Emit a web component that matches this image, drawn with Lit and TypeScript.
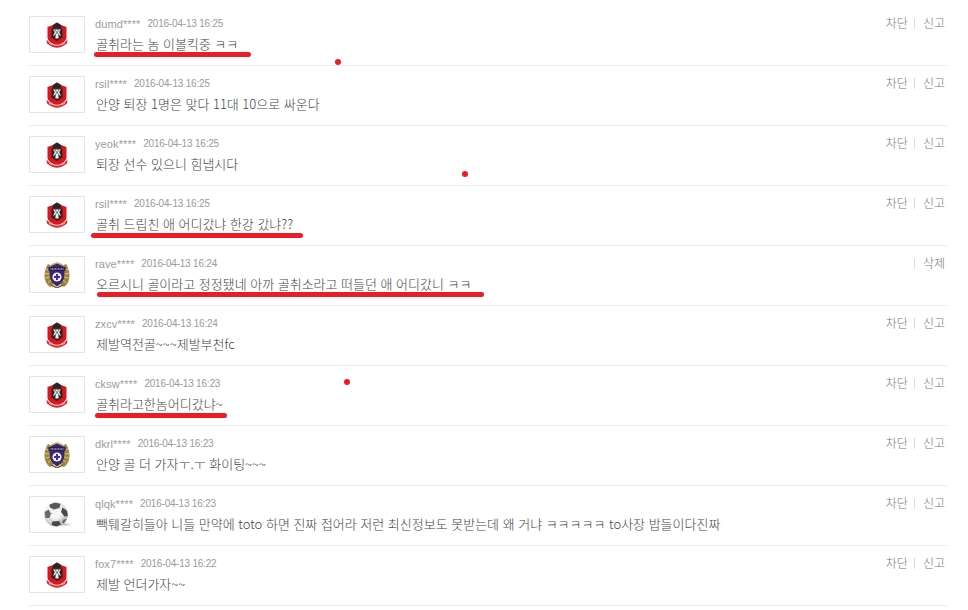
import { LitElement, html, css, svg } from "lit";
import { customElement } from "lit/decorators.js";

const red = svg`<svg class="crest" width="22" height="26" viewBox="0 0 22 26">
  <path d="M1.5 5 L7 3 L11 0.5 L15 3 L20.5 5 L20.5 16 C19.5 20 15 22 11 23.5 C7 22 2.5 20 1.5 16 Z" fill="#d7181e"/>
  <path d="M7 3 L11 0.5 L15 3 L15.5 6.5 L6.5 6.5 Z" fill="#2a2526"/>
  <path d="M5.5 6.5 H16.5 V15.5 L11 19 L5.5 15.5 Z" fill="#2b2325"/>
  <path d="M7 7.5 H15 L13.2 10 L15 14 L12.4 12.4 L12.6 16.5 L9.4 16.5 L9.6 12.4 L7 14 L8.8 10 Z" fill="#eeeeee"/>
  <path d="M9 8 L13 13 M13 8 L9 13" stroke="#555" stroke-width="0.8"/>
  <path d="M0.5 17.5 C3 21 7 23 11 23.5 C15 23 19 21 21.5 17.5 L21 21.5 C17 24.5 14 25.7 11 25.7 C8 25.7 5 24.5 1 21.5 Z" fill="#d82a30"/>
  <path d="M3 21.2 C7 23.8 15 23.8 19 21.2" fill="none" stroke="#f8d0d0" stroke-width="0.8"/>
</svg>`;

const purple = svg`<svg class="crest" width="26" height="26" viewBox="0 0 26 26">
  <path d="M4 2 C-1 10 -1 20 6 25 L11 21 C7 17 6 11 8 4 Z" fill="#a0823f"/>
  <path d="M22 2 C27 10 27 20 20 25 L15 21 C19 17 20 11 18 4 Z" fill="#a0823f"/>
  <path d="M2 7 L5 8.5 M1 11.5 L5 12 M1.5 16 L5.5 15 M4 20.5 L7 18 M24 7 L21 8.5 M25 11.5 L21 12 M24.5 16 L20.5 15 M22 20.5 L19 18" stroke="#e0c888" stroke-width="1"/>
  <path d="M13 1 L18 3 L20.5 7 L20 16 C19 20 16 22.5 13 24.5 C10 22.5 7 20 6 16 L5.5 7 L8 3 Z" fill="#38266f"/>
  <path d="M4.5 5 H21.5 V9 H4.5 Z" fill="#2a1e55"/>
  <path d="M6.5 7 H19.5" stroke="#d8d2ee" stroke-width="1.1" stroke-dasharray="1 .5"/>
  <circle cx="13" cy="15" r="4.6" fill="#efeaf6"/>
  <path d="M13 12 V18 M10 15 H16" stroke="#43308a" stroke-width="2"/>
  <path d="M7.5 3 L13 0.8 L18.5 3" fill="none" stroke="#cdac62" stroke-width="1.4"/>
  <path d="M7 23 L13 25.8 L19 23" fill="none" stroke="#7a5d28" stroke-width="1.4"/>
</svg>`;

const ball = svg`<svg class="crest ballicon" width="32" height="26" viewBox="0 0 32 26">
  <defs>
    <radialGradient id="sh" cx="0.5" cy="0.5" r="0.5"><stop offset="0" stop-color="#a9b9ca"/><stop offset="1" stop-color="#fff" stop-opacity="0"/></radialGradient>
    <radialGradient id="bg" cx="0.42" cy="0.36" r="0.72"><stop offset="0.4" stop-color="#f6f6f6"/><stop offset="1" stop-color="#a8a8a8"/></radialGradient>
  </defs>
  <ellipse cx="21" cy="22.5" rx="11" ry="3" fill="url(#sh)"/>
  <circle cx="12" cy="12.5" r="12" fill="url(#bg)"/>
  <path d="M5.5 2.5 L11 0.6 L16.5 1.8 L15.5 6 L10 7.5 L5.8 5.5 Z" fill="#5a5a5a"/>
  <path d="M18.5 5.5 L23 9 L23.8 14 L20.5 14.5 L17 10 Z" fill="#4a4a4a"/>
  <path d="M0.6 10 L4.5 7.5 L7 11.5 L5.5 16 L1.5 16 Z" fill="#6a6a6a"/>
  <path d="M8.5 19.5 L15 19 L17 22.5 L12.5 24.4 L7.5 23 Z" fill="#474747"/>
  <path d="M19.5 17.5 L22.5 17 L20 21.5 L18 20.5 Z" fill="#666"/>
  <path d="M10 7.5 L8.5 9 M15.5 6 L17.5 7 M7 11.5 L9 11.5 M5.5 16 L8.5 19.5 M15 19 L18.5 17.5 M20.5 14.5 L19.5 17.5" stroke="#aaa" stroke-width="0.6"/>
</svg>`;

type Row = { u: string; d: string; t: string; a: "r" | "p" | "b"; mine?: boolean; ul?: [number, number, number] };

const rows: Row[] = [
  { u: "dumd****", d: "2016-04-13 16:25", t: "골취라는 놈 이볼킥중 ㅋㅋ", a: "r", ul: [94, 251, 46] },
  { u: "rsil****", d: "2016-04-13 16:25", t: "안양 퇴장 1명은 맞다 11대 10으로 싸운다", a: "r" },
  { u: "yeok****", d: "2016-04-13 16:25", t: "퇴장 선수 있으니 힘냅시다", a: "r" },
  { u: "rsil****", d: "2016-04-13 16:25", t: "골취 드립친 애 어디갔냐 한강 갔냐??", a: "r", ul: [91, 303, 47] },
  { u: "rave****", d: "2016-04-13 16:24", t: "오르시니 골이라고 정정됐네 아까 골취소라고 떠들던 애 어디갔니 ㅋㅋ", a: "p", mine: true, ul: [97, 484, 46] },
  { u: "zxcv****", d: "2016-04-13 16:24", t: "제발역전골~~~제발부천fc", a: "r" },
  { u: "cksw****", d: "2016-04-13 16:23", t: "골취라고한놈어디갔냐~", a: "r", ul: [95, 227, 47] },
  { u: "dkrl****", d: "2016-04-13 16:23", t: "안양 골 더 가자ㅜ.ㅜ 화이팅~~~", a: "p" },
  { u: "qlqk****", d: "2016-04-13 16:23", t: "빽퉤갈히들아 니들 만약에 toto 하면 진짜 접어라 저런 최신정보도 못받는데 왜 거냐 ㅋㅋㅋㅋㅋ to사장 밥들이다진짜", a: "b" },
  { u: "fox7****", d: "2016-04-13 16:22", t: "제발 언더가자~~", a: "r" },
];

const dots = [[335, 59], [462, 171], [344, 379]];

@customElement("app-root")
export class AppRoot extends LitElement {
  static styles = css`
    :host { display: block; width: 968px; height: 610px; position: relative; overflow: hidden; background: #fff;
      font-family: "Noto Sans CJK KR", "Liberation Sans", sans-serif; }
    .list { margin: 0 21px 0 29px; padding-top: 6px; }
    .row { position: relative; box-sizing: border-box; height: 60px; padding-top: 10px; border-bottom: 1px solid #ebebeb; display: flex; }
    .avatar { box-sizing: border-box; width: 56px; height: 37px; border: 1px solid #e4e4e4; display: flex; align-items: center; justify-content: center; margin-right: 10px; flex: none; background: #fff; }
    .ballicon { margin-left: 5px; }
    .body { flex: 1; min-width: 0; }
    .meta { display: flex; gap: 7px; height: 14px; line-height: 14px; font-family: "Liberation Sans", sans-serif; margin-top: 1px; }
    .date { color: #9d9a96; letter-spacing: -0.2px; font-size: 10px; }
    .user { color: #9a9da3; font-size: 11px; letter-spacing: 0.1px; }
    .text { margin-top: 4px; margin-left: 1px; font-size: 13px; font-weight: 300; line-height: 18px; color: #444; white-space: nowrap; word-spacing: 0.7px; }
    .actions { position: absolute; top: 9px; right: 2px; display: flex; align-items: center; font-size: 12px; font-weight: 300; line-height: 16px; color: #777; }
    .sep { width: 1px; height: 11px; background: #dcdce4; margin: 0 8px 0 6px; }
    .mark { position: absolute; height: 5px; border-radius: 3px; background: #ed1c24; }
    .dot { position: absolute; width: 6px; height: 6px; border-radius: 50%; background: #ed1c24; }
    .crest { display: block; }
  `;

  render() {
    return html`
      <div class="list">
        ${rows.map((r) => html`
          <div class="row">
            <div class="avatar">${r.a === "r" ? red : r.a === "p" ? purple : ball}</div>
            <div class="body">
              <div class="meta"><span class="user">${r.u}</span><span class="date">${r.d}</span></div>
              <div class="text">${r.t}</div>
            </div>
            <div class="actions">
              ${r.mine ? html`<span class="sep"></span><span>삭제</span>` : html`<span>차단</span><span class="sep"></span><span>신고</span>`}
            </div>
            ${r.ul ? html`<div class="mark" style="left:${r.ul[0] - 29}px;width:${r.ul[1] - r.ul[0]}px;top:${r.ul[2]}px"></div>` : ""}
          </div>`)}
      </div>
      ${dots.map(([x, y]) => html`<div class="dot" style="left:${x}px;top:${y}px"></div>`)}
    `;
  }
}
